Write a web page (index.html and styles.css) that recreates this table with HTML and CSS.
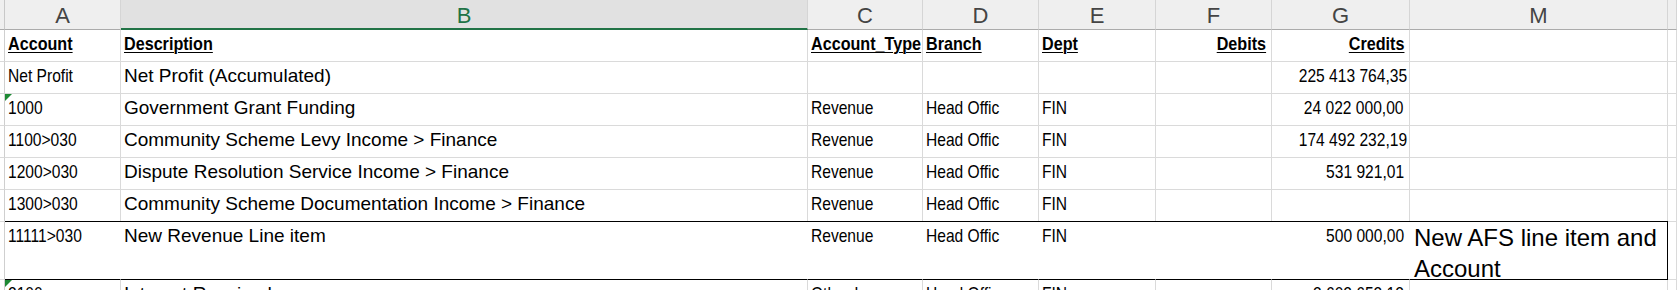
FILE: index.html
```html
<!DOCTYPE html>
<html lang="en">
<head>
  <meta charset="UTF-8" />
  <meta name="viewport" content="width=device-width, initial-scale=1.0" />
  <title>AFS Trial Balance</title>
  <link rel="stylesheet" href="styles.css">
</head>
<body>
  <div class="sheet">
    <!-- Column letters -->
    <div class="row col-heads">
      <div class="stub"></div>
      <div class="col-head">A</div>
      <div class="col-head selected">B</div>
      <div class="col-head">C</div>
      <div class="col-head">D</div>
      <div class="col-head">E</div>
      <div class="col-head">F</div>
      <div class="col-head">G</div>
      <div class="col-head">M</div>
      <div class="col-head"></div>
    </div>

    <!-- Field names -->
    <div class="row titles">
      <div class="stub"></div>
      <div class="cell"><span><u>Account</u></span></div>
      <div class="cell"><span><u>Description</u></span></div>
      <div class="cell"><span><u>Account_Type</u></span></div>
      <div class="cell"><span><u>Branch</u></span></div>
      <div class="cell"><span><u>Dept</u></span></div>
      <div class="cell num"><span><u>Debits</u></span></div>
      <div class="cell num"><span><u>Credits</u></span></div>
      <div class="cell"></div>
      <div class="cell"></div>
    </div>

    <div class="row">
      <div class="stub"></div>
      <div class="cell"><span>Net Profit</span></div>
      <div class="cell wide">Net Profit (Accumulated)</div>
      <div class="cell"></div>
      <div class="cell"></div>
      <div class="cell"></div>
      <div class="cell num"></div>
      <div class="cell num"><span>225 413 764,35</span></div>
      <div class="cell"></div>
      <div class="cell"></div>
    </div>

    <div class="row">
      <div class="stub"></div>
      <div class="cell flagged"><span>1000</span></div>
      <div class="cell wide">Government Grant Funding</div>
      <div class="cell"><span>Revenue</span></div>
      <div class="cell"><span>Head Offic</span></div>
      <div class="cell"><span>FIN</span></div>
      <div class="cell num"></div>
      <div class="cell num"><span>24 022 000,00</span></div>
      <div class="cell"></div>
      <div class="cell"></div>
    </div>

    <div class="row">
      <div class="stub"></div>
      <div class="cell"><span>1100&gt;030</span></div>
      <div class="cell wide">Community Scheme Levy Income &gt; Finance</div>
      <div class="cell"><span>Revenue</span></div>
      <div class="cell"><span>Head Offic</span></div>
      <div class="cell"><span>FIN</span></div>
      <div class="cell num"></div>
      <div class="cell num"><span>174 492 232,19</span></div>
      <div class="cell"></div>
      <div class="cell"></div>
    </div>

    <div class="row">
      <div class="stub"></div>
      <div class="cell"><span>1200&gt;030</span></div>
      <div class="cell wide">Dispute Resolution Service Income &gt; Finance</div>
      <div class="cell"><span>Revenue</span></div>
      <div class="cell"><span>Head Offic</span></div>
      <div class="cell"><span>FIN</span></div>
      <div class="cell num"></div>
      <div class="cell num"><span>531 921,01</span></div>
      <div class="cell"></div>
      <div class="cell"></div>
    </div>

    <div class="row">
      <div class="stub"></div>
      <div class="cell"><span>1300&gt;030</span></div>
      <div class="cell wide">Community Scheme Documentation Income &gt; Finance</div>
      <div class="cell"><span>Revenue</span></div>
      <div class="cell"><span>Head Offic</span></div>
      <div class="cell"><span>FIN</span></div>
      <div class="cell num"></div>
      <div class="cell num"></div>
      <div class="cell"></div>
      <div class="cell"></div>
    </div>

    <!-- New line item, boxed and filled -->
    <div class="row tall">
      <div class="stub"></div>
      <div class="cell boxed"><span>11111&gt;030</span></div>
      <div class="cell wide boxed">New Revenue Line item</div>
      <div class="cell boxed"><span>Revenue</span></div>
      <div class="cell boxed"><span>Head Offic</span></div>
      <div class="cell boxed"><span>FIN</span></div>
      <div class="cell num boxed"></div>
      <div class="cell num boxed"><span>500 000,00</span></div>
      <div class="cell note boxed end">New AFS line item and Account</div>
      <div class="cell"></div>
    </div>

    <div class="row">
      <div class="stub"></div>
      <div class="cell flagged"><span>2100</span></div>
      <div class="cell wide">Interest Received</div>
      <div class="cell"><span>Other Income</span></div>
      <div class="cell"><span>Head Offic</span></div>
      <div class="cell"><span>FIN</span></div>
      <div class="cell num"></div>
      <div class="cell num"><span>3 602 653,12</span></div>
      <div class="cell"></div>
      <div class="cell"></div>
    </div>
  </div>
</body>
</html>
```

FILE: styles.css
```css
* {
  margin: 0;
  padding: 0;
  box-sizing: border-box;
}

body {
  background: #fff;
  color: #000;
  overflow: hidden;
  font-family: "Liberation Sans", Arial, sans-serif;
}

/* Grid of columns: row header stub, A, B, C, D, E, F, G, M, N */
.row {
  display: grid;
  grid-template-columns: 5px 116px 687px 115px 116px 117px 116px 138px 258px 1fr;
  height: 32px;
}

.stub {
  border-right: 1px solid #cfcfcf;
  border-bottom: 1px solid #dadada;
}

/* Column letter bar */
.col-heads {
  height: 30px;
  background: #efefef;
}
.col-heads .stub {
  border-bottom: 1px solid #ababab;
  border-right-color: #c8c8c8;
}
.col-head {
  border-right: 1px solid #d5d5d5;
  border-bottom: 1px solid #ababab;
  text-align: center;
  font-size: 22px;
  line-height: 22px;
  padding-top: 5px;
  color: #444;
}
.col-head.selected {
  background: #e1e1e1;
  color: #217346;
  border-bottom: 2px solid #217346;
}

/* Cells */
.cell {
  position: relative;
  border-right: 1px solid #dadada;
  border-bottom: 1px solid #dadada;
  padding: 3px 3px 0;
  font-size: 19px;
  line-height: 22px;
  white-space: nowrap;
  overflow: hidden;
}

/* no Arial Narrow here: squeeze the regular face instead */
.cell span {
  display: inline-block;
  transform: scaleX(0.82);
  transform-origin: left center;
}
.cell.num {
  text-align: right;
  padding-right: 5px;
}
.cell.num span {
  transform-origin: right center;
}

.titles .cell {
  font-weight: bold;
}
.titles .cell span {
  transform: scaleX(0.85);
}
.titles u {
  text-decoration-thickness: 1px;
  text-underline-offset: 2px;
}

/* Green error marker in the corner */
.cell.flagged::before {
  content: "";
  position: absolute;
  top: 0;
  left: 0;
  border-top: 7px solid #1e8a35;
  border-right: 7px solid transparent;
}

/* Boxed row */
.tall {
  height: 58px;
}
.cell.boxed {
  background: #fff;
  border-right-color: #fff;
  border-bottom-color: #000;
  box-shadow: 0 -1px 0 #000;
}
.cell.boxed.end {
  border-right-color: #000;
}
.cell.note {
  font-size: 24px;
  line-height: 31px;
  padding: 0 4px;
  white-space: normal;
}
```
